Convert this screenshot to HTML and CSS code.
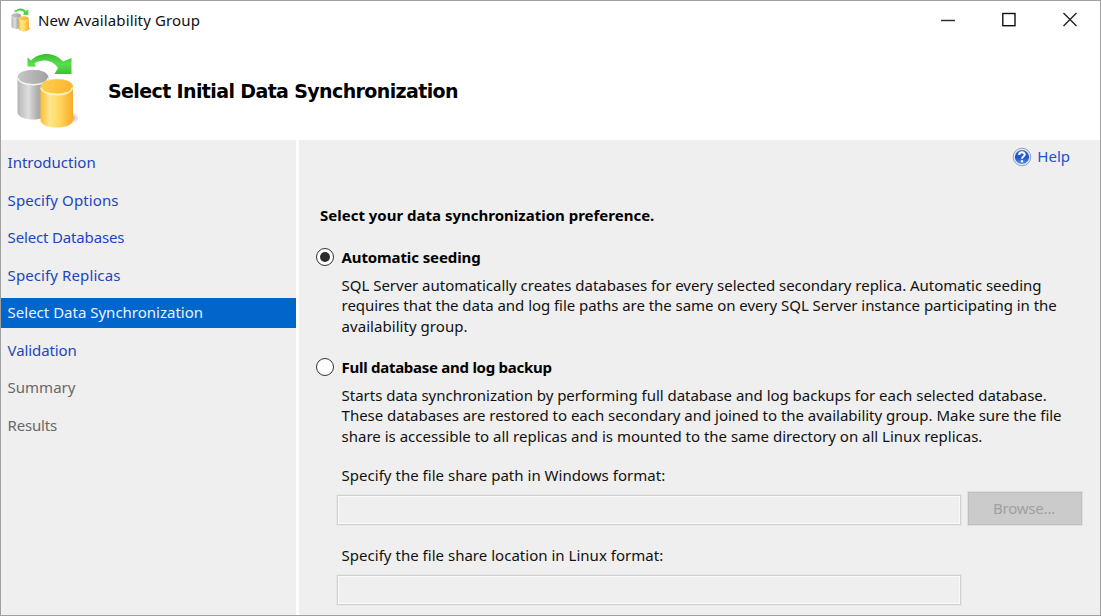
FILE: index.html
```
<!DOCTYPE html>
<html lang="en">
<head>
<meta charset="utf-8">
<title>New Availability Group</title>
<link rel="stylesheet" href="styles.css">
</head>
<body>
<svg class="defs" aria-hidden="true">
  <defs>
    <linearGradient id="gray" x1="0" x2="1"><stop offset="0" stop-color="#b4b4b4"/><stop offset=".12" stop-color="#c4c4c4"/><stop offset=".35" stop-color="#dedede"/><stop offset=".65" stop-color="#adadad"/><stop offset="1" stop-color="#a0a0a0"/></linearGradient>
    <linearGradient id="grayTop" x1="0" x2="1"><stop offset="0" stop-color="#c6c6c6"/><stop offset="1" stop-color="#a2a2a2"/></linearGradient>
    <linearGradient id="gold" x1="0" x2="1"><stop offset="0" stop-color="#fbbd35"/><stop offset=".28" stop-color="#ffe68c"/><stop offset=".6" stop-color="#ffd65c"/><stop offset="1" stop-color="#f8aa28"/></linearGradient>
    <linearGradient id="goldTop" x1="0" x2="1"><stop offset="0" stop-color="#fdcf4e"/><stop offset="1" stop-color="#fcb52f"/></linearGradient>
    <linearGradient id="green" x1="0" y1="0" x2="0" y2="1"><stop offset="0" stop-color="#36c02c"/><stop offset=".5" stop-color="#5ddc50"/><stop offset="1" stop-color="#38c42e"/></linearGradient>
    <radialGradient id="shadow"><stop offset="0" stop-color="#777" stop-opacity=".8"/><stop offset="1" stop-color="#999" stop-opacity="0"/></radialGradient>
    <linearGradient id="help" x1="0" y1="0" x2="0" y2="1"><stop offset="0" stop-color="#3c78dc"/><stop offset=".5" stop-color="#1c50c8"/><stop offset="1" stop-color="#4f94f4"/></linearGradient>
    <symbol id="databases" viewBox="0 0 64 76">
      <ellipse cx="54" cy="65" rx="10" ry="6" fill="url(#shadow)"/>
      <path d="M1.500 25C1.500 14 32.500 14 32.500 25V59C32.500 69 1.500 69 1.500 59Z" fill="url(#gray)"/>
      <ellipse cx="17" cy="24" rx="15" ry="7" fill="url(#grayTop)"/>
      <path d="M2 25C3 34 31 34 32 25" fill="none" stroke="#f4f4f4" stroke-width="1.500"/>
      <path d="M24.500 34C24.500 23 57 23 57 34V67C57 77 24.500 77 24.500 67Z" fill="url(#gold)"/>
      <ellipse cx="40.700" cy="33.500" rx="15.600" ry="7" fill="url(#goldTop)"/>
      <path d="M25 34.500C26 44 55.500 44 56.500 34.500" fill="none" stroke="#fff2b4" stroke-width="1.700"/>
      <path d="M11.500 4.500L15 7.500C23-1 38-1.500 47 8.500L55.500 5V21H38.500L42 15C37 7 26 5.500 18.500 10.500L20 13.500H11.500Z" fill="url(#green)"/>
    </symbol>
  </defs>
</svg>
<div class="window">
  <header class="header">
    <div class="titlebar">
      <svg class="app-icon"><use href="#databases"/></svg>
      <span class="title">New Availability Group</span>
      <div class="controls">
        <svg viewBox="0 0 16 16"><path d="M1 8.500H15" stroke="#333" stroke-width="1.500"/></svg>
        <svg viewBox="0 0 16 16"><rect x="1.800" y="1.500" width="12.200" height="12.200" fill="none" stroke="#111" stroke-width="1.400"/></svg>
        <svg viewBox="0 0 16 16"><path d="M1.500 1L14.500 14M14.500 1L1.500 14" stroke="#222" stroke-width="1.350"/></svg>
      </div>
    </div>
    <div class="banner">
      <svg class="banner-icon"><use href="#databases"/></svg>
      <h1>Select Initial Data Synchronization</h1>
    </div>
  </header>
  <div class="body">
    <nav class="steps">
      <a>Introduction</a>
      <a class="t1">Specify Options</a>
      <a class="t2">Select Databases</a>
      <a class="t1">Specify Replicas</a>
      <a class="active">Select Data Synchronization</a>
      <a class="t3">Validation</a>
      <a class="disabled">Summary</a>
      <a class="disabled t4">Results</a>
    </nav>
    <main class="content">
      <a class="help">
        <svg viewBox="0 0 20 20"><circle cx="10" cy="10" r="8.800" fill="#e4eaf4" stroke="#8898bd" stroke-width=".9"/><circle cx="10" cy="10" r="7.100" fill="url(#help)"/><path d="M7.200 8C7.200 4.400 12.900 4.600 12.700 7.700C12.600 9.700 10 9.400 10 11.700" fill="none" stroke="#fff" stroke-width="2"/><circle cx="10" cy="14.200" r="1.250" fill="#fff"/></svg>
        <span>Help</span>
      </a>
      <h2>Select your data synchronization preference.</h2>
      <div class="option">
        <span class="radio checked"></span>
        <h3 class="t5">Automatic seeding</h3>
      </div>
      <p><span class="p1">SQL Server automatically creates databases for every selected secondary replica. Automatic seeding</span><br><span class="p2">requires that the data and log file paths are the same on every SQL Server instance participating in the</span><br><span class="p3">availability group.</span></p>
      <div class="option second">
        <span class="radio"></span>
        <h3 class="t6">Full database and log backup</h3>
      </div>
      <p><span class="p1">Starts data synchronization by performing full database and log backups for each selected database.</span><br><span class="p1">These databases are restored to each secondary and joined to the availability group. Make sure the file</span><br><span>share is accessible to all replicas and is mounted to the same directory on all Linux replicas.</span></p>
      <div class="label first">Specify the file share path in Windows format:</div>
      <div class="field"><div class="input"></div><div class="browse">Browse...</div></div>
      <div class="label">Specify the file share location in Linux format:</div>
      <div class="field"><div class="input"></div></div>
    </main>
  </div>
</div>
</body>
</html>
```
FILE: styles.css
```
* { box-sizing: border-box; }
body { margin: 0; font: 15px/20px "Noto Sans", "Open Sans", sans-serif; color: #111; }
h1, h2, h3, p { margin: 0; }
.defs { position: absolute; width: 0; height: 0; }
.window { width: 1101px; height: 616px; border: 1px solid #a0a0a0; background: #efefef; overflow: hidden; display: flex; flex-direction: column; }
.header { height: 139px; flex: none; background: #fff; }
.titlebar { height: 38px; display: flex; align-items: center; padding: 0 22px 0 10px; }
.app-icon { width: 20px; height: 24px; margin-right: 7px; }
.title { letter-spacing: .126px; }
.controls { margin-left: auto; display: flex; gap: 45px; }
.controls svg { width: 16px; height: 16px; }
.banner { height: 101px; display: flex; align-items: center; padding-left: 15px; }
.banner-icon { width: 64px; height: 76px; margin: 2px 28px 0 0; }
h1 { font: bold 19px/24px "DejaVu Sans", Verdana, sans-serif; letter-spacing: -.62px; color: #000; margin-top: 2px; }
.body { flex: 1; display: flex; }
.steps { width: 295px; padding-top: 8px; display: flex; flex-direction: column; gap: 7.5px; color: #1c46bd; }
.steps a { flex: none; height: 30px; line-height: 28px; padding-left: 6.6px; }
.steps .active { background: #0066cc; color: #e8f3ff; }
.steps .disabled { color: #686868; }
.steps .t1 { letter-spacing: .1px; }
.t2 { letter-spacing: -.16px; }
.t3 { letter-spacing: -.1px; }
.t4 { letter-spacing: -.2px; }
.t5 { letter-spacing: -.11px; }
.t6 { letter-spacing: -.27px; }
.content { flex: 1; border-left: 3px solid #fdfdfd; padding: 6px 18px 0 21px; white-space: nowrap; }
.help { display: flex; justify-content: flex-end; gap: 5px; padding-right: 12px; color: #2450cd; }
.help svg { width: 20px; height: 20px; margin-top: 1px; }
h2, h3 { font-size: 15px; line-height: 20px; color: #000; }
h2 { margin-top: 38px; }
.option { display: flex; align-items: center; gap: 8px; margin: 22px 0 8px -4.5px; }
.option.second { margin-top: 21px; }
.radio { width: 18px; height: 18px; border: 1.500px solid #333; border-radius: 50%; background: #fff; display: grid; place-items: center; }
.radio.checked::before { content: ""; width: 10px; height: 10px; border-radius: 50%; background: #2b2b2b; }
p { margin-left: 21.6px; line-height: 20.3px; height: 61px; }
.p1 { letter-spacing: -.023px; }
.p2 { letter-spacing: -.047px; }
.p3 { letter-spacing: .046px; }
.label { margin: 20px 0 10px 21.6px; letter-spacing: .02px; }
.label.first { margin-top: 19px; }
.field { display: flex; align-items: flex-end; gap: 7px; margin-left: 17px; }
.input { width: 624px; height: 30px; border: 1px solid #d0d0d0; box-shadow: inset 0 0 0 1px #fafafa; outline: 1px solid #e7e7e7; }
.browse { width: 114px; height: 33px; margin-top: -3px; border: 1px solid #bfbfbf; background: #cbcbcb; color: #a0a0a0; text-align: center; line-height: 31px; text-indent: -2px; letter-spacing: -.2px; outline: 1px solid #e0e0e0; }
```
